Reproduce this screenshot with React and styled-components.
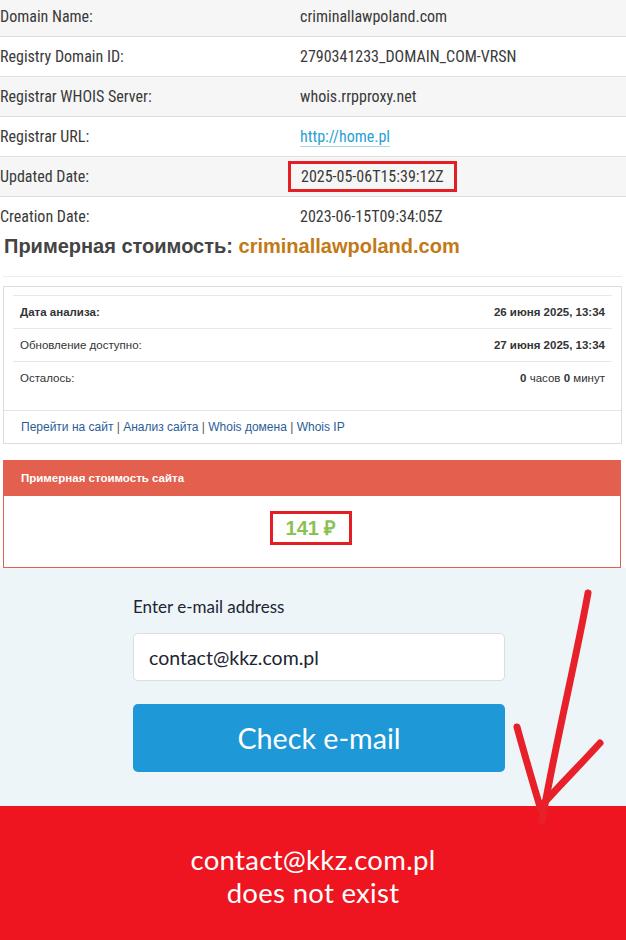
import React from "react";
import styled, { createGlobalStyle } from "styled-components";

const GlobalStyle = createGlobalStyle`
  body {
    margin: 0;
    background: #fff;
    font-family: "Liberation Sans", Arial, sans-serif;
  }
`;

const Page = styled.div`
  position: relative;
  width: 626px;
  height: 940px;
  overflow: hidden;
`;

const Whois = styled.div`
  margin-top: -3px;
  font-family: "Roboto Condensed", "Liberation Sans Narrow", "DejaVu Sans Condensed", Roboto, sans-serif;
  font-size: 16px;
  color: #3a3a3a;
`;

const WhoisRow = styled.div`
  display: grid;
  grid-template-columns: 300px 1fr;
  align-items: center;
  box-sizing: border-box;
  height: ${(p) => (p.last ? "38px" : "40px")};
  background: ${(p) => (p.striped ? "#f6f6f6" : "#fff")};
  border-bottom: ${(p) => (p.last ? "none" : "1px solid #dedede")};
`;

const Value = styled.span`
  justify-self: start;
  padding: ${(p) => (p.marked ? "3px 10px 3px 10px" : "0")};
  margin-left: ${(p) => (p.marked ? "-12px" : "0")};
  border: ${(p) => (p.marked ? "3px solid #e31e24" : "none")};
`;

const Link = styled.a`
  color: #2a9fd6;
  text-decoration: none;
  border-bottom: 1px solid #a8d8f0;
`;

const Heading = styled.h2`
  margin: 0 0 19px 4px;
  font-size: 20px;
  line-height: 22px;
  font-weight: bold;
  color: #444;
`;

const Domain = styled.span`
  color: #c17a16;
`;

const Divider = styled.div`
  margin: 0 4px 9px 3px;
  border-top: 1px solid #ececec;
`;

const Card = styled.div`
  margin: 0 4px 16px 3px;
  border: 1px solid #dcdcdc;
  font-size: 11.5px;
  color: #333;
`;

const InfoTable = styled.div`
  margin: 8px 9px 16px 9px;
  border-top: 1px solid #e8e8e8;
`;

const InfoRow = styled.div`
  display: flex;
  justify-content: space-between;
  align-items: center;
  height: 32px;
  padding: 0 7px 0 7px;
  border-bottom: ${(p) => (p.last ? "none" : "1px solid #e8e8e8")};
  font-weight: ${(p) => (p.bold ? "bold" : "normal")};
`;

const Strong = styled.b`
  font-weight: bold;
`;

const CardFooter = styled.div`
  border-top: 1px solid #e4e4e4;
  height: 32px;
  display: flex;
  align-items: center;
  padding-left: 17px;
  font-size: 12px;
  color: #555;
`;

const FooterLink = styled.a`
  color: #2b5c9a;
  text-decoration: none;
`;

const PricePanel = styled.div`
  margin: 0 5px 0 3px;
  border: 1px solid #e3604f;
  border-top: none;
`;

const PriceHead = styled.div`
  background: #e3604f;
  height: 36px;
  display: flex;
  align-items: center;
  padding-left: 17px;
  color: #fff;
  font-weight: bold;
  font-size: 11.5px;
`;

const PriceBody = styled.div`
  box-sizing: border-box;
  height: 71px;
  padding-bottom: 7px;
  display: flex;
  align-items: center;
  justify-content: center;
`;

const Price = styled.span`
  border: 3px solid #e31e24;
  padding: 2px 13px;
  margin-left: -2px;
  font-size: 20px;
  line-height: 24px;
  font-weight: bold;
  color: #8cc152;
`;

const Checker = styled.section`
  background: #eef5f9;
  padding: 29px 0 34px 133px;
  font-family: Lato, "Open Sans", sans-serif;
  color: #1c2533;
`;

const Form = styled.div`
  width: 372px;
  display: flex;
  flex-direction: column;
`;

const Label = styled.label`
  font-size: 17px;
  line-height: 20px;
  margin-bottom: 16px;
`;

const Input = styled.div`
  box-sizing: border-box;
  height: 48px;
  background: #fff;
  border: 1px solid #d9dee3;
  border-radius: 5px;
  display: flex;
  align-items: center;
  padding-left: 15px;
  font-size: 19.5px;
  margin-bottom: 23px;
`;

const Button = styled.button`
  height: 68px;
  border: none;
  border-radius: 5px;
  background: #1e98d6;
  color: #fff;
  font-family: inherit;
  font-size: 28.7px;
  cursor: pointer;
`;

const Result = styled.div`
  box-sizing: border-box;
  height: 134px;
  padding-top: 6px;
  background: #ee1520;
  color: #fff;
  font-family: Lato, "Open Sans", sans-serif;
  font-size: 27.5px;
  line-height: 33px;
  letter-spacing: 0.3px;
  text-align: center;
  display: flex;
  flex-direction: column;
  justify-content: center;
`;

const Arrow = styled.svg`
  position: absolute;
  left: 0;
  top: 0;
  pointer-events: none;
`;

const rows = [
  ["Domain Name:", "criminallawpoland.com"],
  ["Registry Domain ID:", "2790341233_DOMAIN_COM-VRSN"],
  ["Registrar WHOIS Server:", "whois.rrpproxy.net"],
  ["Registrar URL:", "http://home.pl", "link"],
  ["Updated Date:", "2025-05-06T15:39:12Z", "marked"],
  ["Creation Date:", "2023-06-15T09:34:05Z"],
];

export default function App() {
  return (
    <Page>
      <GlobalStyle />
      <Whois>
        {rows.map(([label, value, kind], i) => (
          <WhoisRow key={label} striped={i % 2 === 0} last={i === rows.length - 1}>
            <span>{label}</span>
            <Value marked={kind === "marked"}>
              {kind === "link" ? <Link href="#">{value}</Link> : value}
            </Value>
          </WhoisRow>
        ))}
      </Whois>

      <Heading>
        Примерная стоимость: <Domain>criminallawpoland.com</Domain>
      </Heading>
      <Divider />

      <Card>
        <InfoTable>
          <InfoRow bold>
            <span>Дата анализа:</span>
            <span>26 июня 2025, 13:34</span>
          </InfoRow>
          <InfoRow>
            <span>Обновление доступно:</span>
            <Strong>27 июня 2025, 13:34</Strong>
          </InfoRow>
          <InfoRow last>
            <span>Осталось:</span>
            <span>
              <Strong>0</Strong> часов <Strong>0</Strong> минут
            </span>
          </InfoRow>
        </InfoTable>
        <CardFooter>
          <FooterLink href="#">Перейти на сайт</FooterLink>&nbsp;|&nbsp;
          <FooterLink href="#">Анализ сайта</FooterLink>&nbsp;|&nbsp;
          <FooterLink href="#">Whois домена</FooterLink>&nbsp;|&nbsp;
          <FooterLink href="#">Whois IP</FooterLink>
        </CardFooter>
      </Card>

      <PricePanel>
        <PriceHead>Примерная стоимость сайта</PriceHead>
        <PriceBody>
          <Price>141 ₽</Price>
        </PriceBody>
      </PricePanel>

      <Checker>
        <Form>
          <Label>Enter e-mail address</Label>
          <Input>contact@kkz.com.pl</Input>
          <Button>Check e-mail</Button>
        </Form>
      </Checker>

      <Result>
        <div>contact@kkz.com.pl</div>
        <div>does not exist</div>
      </Result>

      <Arrow width="626" height="940" viewBox="0 0 626 940">
        <g stroke="#e8202a" strokeWidth="7" strokeLinecap="round" fill="none">
          <path d="M588 593 C 576 660, 556 740, 542 821" />
          <path d="M517 727 C 526 760, 535 790, 541 810" />
          <path d="M600 743 C 580 765, 560 785, 544 803" />
        </g>
      </Arrow>
    </Page>
  );
}
